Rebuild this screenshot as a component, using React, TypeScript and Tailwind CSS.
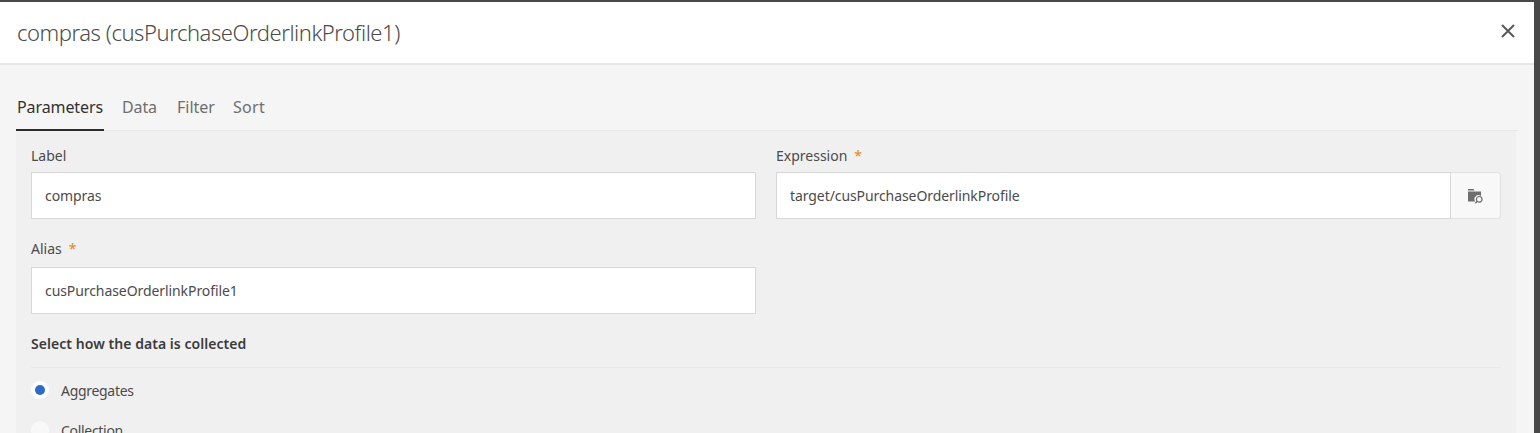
import React from 'react';

const font = "font-['Noto_Sans','Open_Sans',sans-serif]";

const Star = () => <span className="ml-[7px] text-[#e68619]">*</span>;

const FieldLabel = ({ text, required }: { text: string; required?: boolean }) => (
  <div className="h-[26px] text-[14px] leading-[20px] text-[#4b4b4b]">
    {text}
    {required && <Star />}
  </div>
);

const TextInput = ({ value }: { value: string }) => (
  <div className="flex h-[47px] items-center border border-[#d8d8d8] bg-white pl-[13px] text-[14px] tracking-[-0.08px] text-[#4b4b4b]">
    {value}
  </div>
);

const FolderSearch = () => (
  <svg width="16" height="16" viewBox="0 0 16 16" fill="#6e6e6e">
    <path d="M0 1h5.5l1 1.5H0zM0 3.5h13v4.6a3.9 3.9 0 0 0-5.6 5.4H0z" />
    <circle cx="11.2" cy="11.3" r="2.8" fill="none" stroke="#6e6e6e" strokeWidth="1.2" />
    <path d="M9.2 13.3 7.4 15.2" fill="none" stroke="#6e6e6e" strokeWidth="1.3" />
  </svg>
);

export default function App() {
  return (
    <div className={`h-[433px] w-[1540px] overflow-hidden bg-[#484848] pt-[2px] pr-[6px] ${font}`}>
      <div className="h-[431px] overflow-hidden bg-[#f5f5f5]">
        {/* Header */}
        <div className="flex h-[63px] items-center justify-between border-b-2 border-[#e6e6e6] bg-white pl-[17px] pr-[19px]">
          <h1 className="pb-[1px] text-[22px] font-light tracking-[-0.45px] text-[#4b4b4b]">
            compras (cusPurchaseOrderlinkProfile1)
          </h1>
          <svg width="14" height="14" viewBox="0 0 14 14" className="mb-[4px]">
            <path d="M1 1l12 12M13 1L1 13" stroke="#5a5a5a" strokeWidth="2" fill="none" />
          </svg>
        </div>

        {/* Tabs */}
        <div className="mx-[16px] flex h-[66px] items-end border-b border-[#e8e8e8] text-[16px] text-[#6e6e6e]">
          <div className="-mb-px h-[35px] border-b-2 border-[#2c2c2c] px-px leading-[22px] tracking-[-0.1px] text-[#323232]">
            Parameters
          </div>
          <div className="ml-[18px] h-[34px] leading-[22px] tracking-[-0.1px]">Data</div>
          <div className="ml-[20px] h-[34px] leading-[22px]">Filter</div>
          <div className="ml-[18px] h-[34px] leading-[22px] tracking-[0.3px]">Sort</div>
        </div>

        {/* Panel */}
        <div className="mx-[16px] w-[1500px] bg-[#f0f0f0] px-[15px] pt-[15px]">
          <div className="grid grid-cols-[725px_725px] gap-x-[20px]">
            <div>
              <FieldLabel text="Label" />
              <TextInput value="compras" />
            </div>
            <div>
              <FieldLabel text="Expression" required />
              <div className="flex">
                <div className="flex-1">
                  <TextInput value="target/cusPurchaseOrderlinkProfile" />
                </div>
                <div className="flex h-[47px] w-[50px] items-center justify-center rounded-r-[4px] border border-l-0 border-[#e1e1e1] bg-[#f8f8f8]">
                  <FolderSearch />
                </div>
              </div>
            </div>
          </div>

          <div className="mt-[20px] w-[725px]">
            <FieldLabel text="Alias" required />
            <div className="mt-[2px]">
              <TextInput value="cusPurchaseOrderlinkProfile1" />
            </div>
          </div>

          <div className="mt-[20px] h-[34px] border-b border-[#e8e8e8] text-[14px] font-semibold leading-[20px] tracking-[0.05px] text-[#3c3c3c]">
            Select how the data is collected
          </div>

          <div className="mt-[10px] flex h-[24px] items-center gap-[12px] text-[14px] tracking-[-0.3px] text-[#4b4b4b]">
            <div className="flex h-[18px] w-[18px] items-center justify-center rounded-full bg-white">
              <div className="h-[10px] w-[10px] rounded-full bg-[#2d6cc4]" />
            </div>
            Aggregates
          </div>
          <div className="mt-[16px] flex h-[24px] items-center gap-[12px] text-[14px] tracking-[-0.3px] text-[#4b4b4b]">
            <div className="h-[18px] w-[18px] rounded-full bg-[#f8f8f8]" />
            Collection
          </div>
        </div>
      </div>
    </div>
  );
}
